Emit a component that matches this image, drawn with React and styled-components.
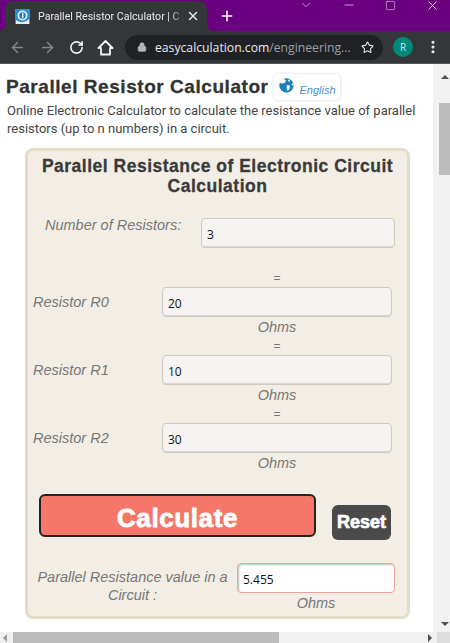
import React from "react";
import styled, { createGlobalStyle } from "styled-components";
import {
  ArrowLeft,
  ArrowRight,
  ChevronDown,
  Lock,
  Minus,
  MoreVertical,
  Plus,
  RotateCw,
  Square,
  Star,
  X,
} from "lucide-react";

const GlobalStyle = createGlobalStyle`
  html, body {
    margin: 0;
    padding: 0;
    height: 643px;
    overflow: hidden;
    background: #fff;
    font-family: "Liberation Sans", Arial, sans-serif;
  }
  * { box-sizing: border-box; }
`;

const resistors = [
  { name: "Resistor R0", value: "20" },
  { name: "Resistor R1", value: "10" },
  { name: "Resistor R2", value: "30" },
];

function Favicon() {
  return (
    <svg width="15" height="15" viewBox="0 0 15 15">
      <rect width="15" height="15" fill="#2f8fc9" />
      <circle cx="7.5" cy="6.5" r="5" fill="#d7ecf6" />
      <circle cx="7.5" cy="6.5" r="3.2" fill="#2a79ad" />
      <path d="M7 4h1.4v5H7z" fill="#e8f4fa" />
      <path d="M1 11c4 3 9 3 13-1v5H1z" fill="#e8f4fa" />
    </svg>
  );
}

function Globe() {
  return (
    <svg width="15" height="15" viewBox="0 0 15 15">
      <circle cx="7.5" cy="7.5" r="7.2" fill="#1f7fbd" />
      <path
        d="M5 0.8 L7 3 L5.6 5 L3 5.6 L1 5 C1.6 3 3 1.4 5 0.8Z"
        fill="#fff"
      />
      <path d="M9 2 L11 1.6 L10.6 3.6 L9.4 3.4Z" fill="#fff" />
      <path d="M8 7 L11 7.6 L10.4 11 L8.6 13 L7.6 10Z" fill="#fff" />
      <path d="M13 5 L14.6 6 L14.4 8 L13 7Z" fill="#fff" />
    </svg>
  );
}

function HouseIcon() {
  return (
    <svg width="17" height="17" viewBox="0 0 17 17" fill="none">
      <path
        d="M1.5 9 L8.5 2 L15.5 9 H13 V15.5 H4 V9 Z"
        stroke="#f1f3f4"
        strokeWidth="1.8"
        strokeLinejoin="round"
      />
    </svg>
  );
}

export default function App() {
  return (
    <Window>
      <GlobalStyle />
      <TabStrip>
        <Tab>
          <Favicon />
          <TabTitle>Parallel Resistor Calculator | C</TabTitle>
          <X size={14} strokeWidth={2.4} color="#e8eaed" />
        </Tab>
        <NewTab>
          <Plus size={16} strokeWidth={2.4} color="#fff" />
        </NewTab>
        <WindowButtons>
          <ChevronDown size={14} strokeWidth={1.4} color="#c9a9d3" />
          <Minus size={14} strokeWidth={1.4} color="#d9bfe0" />
          <Square size={11} strokeWidth={1.2} color="#f0e6f3" />
          <X size={15} strokeWidth={1.3} color="#f5edf7" />
        </WindowButtons>
      </TabStrip>

      <Toolbar>
        <NavIcons>
          <ArrowLeft size={17} strokeWidth={2} color="#85878b" />
          <ArrowRight size={17} strokeWidth={2} color="#85878b" />
          <RotateCw size={15} strokeWidth={2.6} color="#f1f3f4" />
          <HouseIcon />
        </NavIcons>
        <Omnibox>
          <Lock size={10} fill="#b5b7ba" color="#b5b7ba" />
          <Url>
            easycalculation.com<UrlPath>/engineering...</UrlPath>
          </Url>
          <Star size={13} strokeWidth={2} color="#e8eaed" />
        </Omnibox>
        <Avatar>R</Avatar>
        <MoreVertical size={16} strokeWidth={2.6} color="#e8eaed" />
      </Toolbar>

      <Viewport>
        <Page>
          <Heading>
            <h1>Parallel Resistor Calculator</h1>
            <LanguageBadge>
              <Globe />
              <span>English</span>
            </LanguageBadge>
          </Heading>
          <Intro>
            Online Electronic Calculator to calculate the resistance value of
            parallel resistors (up to n numbers) in a circuit.
          </Intro>

          <Card>
            <CardTitle>Parallel Resistance of Electronic Circuit Calculation</CardTitle>

            <CountRow>
              <Label>Number of Resistors:</Label>
              <Field readOnly value="3" />
            </CountRow>

            {resistors.map((r) => (
              <ResistorRow key={r.name}>
                <ResistorLabel>{r.name}</ResistorLabel>
                <ResistorCell>
                  <Equals>=</Equals>
                  <Field readOnly value={r.value} />
                  <Unit>Ohms</Unit>
                </ResistorCell>
              </ResistorRow>
            ))}

            <Actions>
              <CalculateButton>Calculate</CalculateButton>
              <ResetButton>Reset</ResetButton>
            </Actions>

            <ResultRow>
              <ResultLabel>Parallel Resistance value in a Circuit :</ResultLabel>
              <ResultCell>
                <Field $result readOnly value="5.455" />
                <Unit>Ohms</Unit>
              </ResultCell>
            </ResultRow>
          </Card>
        </Page>

        <VScroll>
          <ArrowUp />
          <VThumb />
          <ArrowDown />
        </VScroll>
      </Viewport>

      <HScroll>
        <ArrowLeftSmall />
        <HThumb />
        <ArrowRightSmall />
        <Corner />
      </HScroll>
    </Window>
  );
}

const Window = styled.div`
  width: 450px;
  height: 643px;
  display: flex;
  flex-direction: column;
  overflow: hidden;
`;

const TabStrip = styled.div`
  height: 31px;
  flex: none;
  display: flex;
  align-items: flex-end;
  padding-left: 5px;
  background: #6a007f;
`;

const Tab = styled.div`
  position: relative;
  width: 202px;
  height: 30px;
  display: flex;
  align-items: center;
  padding: 0 7px 0 10px;
  gap: 4px;
  border-radius: 8px 8px 0 0;
  background: #35363a;

  &::before,
  &::after {
    content: "";
    position: absolute;
    bottom: 0;
    width: 6px;
    height: 6px;
  }
  &::before {
    left: -6px;
    background: radial-gradient(circle at 0 0, #6a007f 5.5px, #35363a 6px);
  }
  &::after {
    right: -6px;
    background: radial-gradient(circle at 100% 0, #6a007f 5.5px, #35363a 6px);
  }
`;

const TabTitle = styled.div`
  flex: 1;
  margin-left: 4px;
  white-space: nowrap;
  font-family: Roboto, sans-serif;
  font-size: 10.6px;
  color: #e8eaed;
  -webkit-mask-image: linear-gradient(to right, #000 92%, rgba(0, 0, 0, 0.2));
  mask-image: linear-gradient(to right, #000 92%, rgba(0, 0, 0, 0.2));
`;

const NewTab = styled.div`
  width: 16px;
  height: 16px;
  margin: 0 0 7px 12px;
`;

const WindowButtons = styled.div`
  margin-left: auto;
  align-self: flex-start;
  width: 151px;
  height: 10px;
  padding-right: 10px;
  display: flex;
  align-items: center;
  justify-content: space-between;
`;

const Toolbar = styled.div`
  height: 33px;
  flex: none;
  display: flex;
  align-items: center;
  padding: 0 0 0 9px;
  background: #35363a;
  border-bottom: 1px solid #54555a;
`;

const NavIcons = styled.div`
  width: 105px;
  display: flex;
  align-items: center;
  justify-content: space-between;
`;

const Omnibox = styled.div`
  width: 258px;
  height: 25px;
  margin-left: 11px;
  display: flex;
  align-items: center;
  padding: 0 9px 0 12px;
  gap: 8px;
  border-radius: 13px;
  background: #202124;
`;

const Url = styled.div`
  flex: 1;
  white-space: nowrap;
  font-family: "Open Sans", sans-serif;
  font-size: 12.2px;
  color: #e8eaed;
`;

const UrlPath = styled.span`
  color: #9aa0a6;
`;

const Avatar = styled.div`
  width: 20px;
  height: 20px;
  margin: 0 12px 0 10px;
  display: flex;
  align-items: center;
  justify-content: center;
  border-radius: 50%;
  background: #00897b;
  color: #cfe8f5;
  font-family: "Open Sans", sans-serif;
  font-size: 10px;
`;

const Viewport = styled.div`
  flex: 1;
  min-height: 0;
  display: flex;
`;

const Page = styled.main`
  width: 433px;
  padding: 10px 0 0 6px;
  overflow: hidden;
  background: #fff;
`;

const Heading = styled.div`
  display: flex;
  align-items: center;
  height: 26px;

  h1 {
    margin: 0;
    font-size: 19px;
    font-weight: bold;
    white-space: nowrap;
    letter-spacing: 0.55px;
    color: #333;
    -webkit-text-stroke: 0.3px #333;
  }
`;

const LanguageBadge = styled.div`
  width: 66px;
  height: 26px;
  margin-left: 5px;
  display: flex;
  align-items: flex-start;
  gap: 6px;
  padding: 4px 0 0 5px;
  border-radius: 4px;
  background: #fff;
  box-shadow: 0 0 3px rgba(0, 0, 0, 0.18);

  span {
    margin-top: 6px;
    font-size: 11px;
    font-style: italic;
    color: #4a90c6;
  }
`;

const Intro = styled.p`
  width: 420px;
  margin: 2px 0 0 1px;
  font-family: Roboto, sans-serif;
  font-size: 13px;
  line-height: 18px;
  color: #444;
`;

const Card = styled.section`
  width: 385px;
  height: 471px;
  margin: 10px 0 0 19px;
  padding: 5px 0 0;
  border: 3px solid #e3dcc7;
  border-radius: 8px;
  background: #f3eee5;
`;

const CardTitle = styled.h2`
  margin: 0;
  padding: 0 10px;
  text-align: center;
  font-size: 17.5px;
  line-height: 20px;
  letter-spacing: 0.5px;
  font-weight: bold;
  color: #3a3a3a;
  -webkit-text-stroke: 0.3px #3a3a3a;
`;

const Label = styled.div`
  font-size: 14.5px;
  line-height: 15px;
  font-style: italic;
  color: #777;
`;

const CountRow = styled.div`
  display: grid;
  grid-template-columns: 156px 194px;
  margin: 22px 0 21px 17px;
  height: 30px;
`;

const Field = styled.input`
  width: 100%;
  height: 30px;
  padding: 2px 5px 0;
  outline: none;
  border: 1px solid ${(p) => (p.$result ? "#f0a29b" : "#cfc9bf")};
  border-radius: 4px;
  background: ${(p) => (p.$result ? "#fff" : "#f6f4f2")};
  box-shadow: ${(p) =>
    p.$result
      ? "inset 1px 1px 2px rgba(0, 0, 0, 0.25)"
      : "inset 0 -1px 1px rgba(0, 0, 0, 0.12)"};
  font-family: "Open Sans", sans-serif;
  font-size: 12px;
  color: #111;
`;

const ResistorRow = styled.div`
  display: grid;
  grid-template-columns: 129px 230px;
  height: 68px;
  margin-left: 5px;
`;

const ResistorLabel = styled(Label)`
  padding-top: 26px;
`;

const ResistorCell = styled.div`
  display: flex;
  flex-direction: column;
  align-items: center;
`;

const Equals = styled.div`
  height: 18px;
  line-height: 18px;
  font-size: 12px;
  color: #777;
`;

const Unit = styled.div`
  height: 20px;
  line-height: 20px;
  font-size: 14.5px;
  font-style: italic;
  color: #777;
`;

const Actions = styled.div`
  display: flex;
  align-items: flex-start;
  margin: 21px 0 0 11px;
`;

const CalculateButton = styled.button`
  width: 277px;
  height: 43px;
  padding: 5px 0 0;
  border: 2px solid #222;
  border-radius: 6px;
  background: #f4776a;
  font-family: "Liberation Sans", sans-serif;
  font-size: 26px;
  font-weight: bold;
  letter-spacing: 0.6px;
  color: #fff;
  -webkit-text-stroke: 0.8px #fff;
`;

const ResetButton = styled.button`
  width: 59px;
  height: 35px;
  margin: 11px 0 0 16px;
  padding: 0;
  border: none;
  border-radius: 6px;
  background: #4a4a4a;
  font-family: "Liberation Sans", sans-serif;
  font-size: 18px;
  font-weight: bold;
  color: #fff;
  -webkit-text-stroke: 0.7px #fff;
`;

const ResultRow = styled.div`
  display: grid;
  grid-template-columns: 209px 158px;
  margin: 23px 0 0 0;
`;

const ResultLabel = styled(Label)`
  padding: 5px 0 0;
  text-align: center;
  line-height: 18px;
`;

const ResultCell = styled(ResistorCell)``;

const VScroll = styled.div`
  width: 17px;
  display: flex;
  flex-direction: column;
  align-items: center;
  padding: 11px 0 6px 6px;
  background: #f1f1f1;
`;

const ArrowUp = styled.div`
  width: 0;
  height: 0;
  border: 4px solid transparent;
  border-top: none;
  border-bottom: 4px solid #505050;
`;

const ArrowDown = styled.div`
  width: 0;
  height: 0;
  margin-top: auto;
  border: 4px solid transparent;
  border-bottom: none;
  border-top: 4px solid #505050;
`;

const VThumb = styled.div`
  width: 100%;
  height: 72px;
  margin-top: 24px;
  background: #bcbcbc;
`;

const HScroll = styled.div`
  height: 11px;
  flex: none;
  display: flex;
  align-items: center;
  background: #f1f1f1;
`;

const ArrowLeftSmall = styled.div`
  width: 0;
  height: 0;
  margin-left: 3px;
  border: 4px solid transparent;
  border-left: none;
  border-right: 4px solid #9a9a9a;
`;

const HThumb = styled.div`
  width: 266px;
  height: 11px;
  margin-left: 6px;
  background: #bcbcbc;
`;

const ArrowRightSmall = styled.div`
  width: 0;
  height: 0;
  margin-left: 149px;
  border: 4px solid transparent;
  border-right: none;
  border-left: 4px solid #505050;
`;

const Corner = styled.div`
  width: 13px;
  height: 11px;
  margin-left: auto;
  background: #dcdcdc;
`;
